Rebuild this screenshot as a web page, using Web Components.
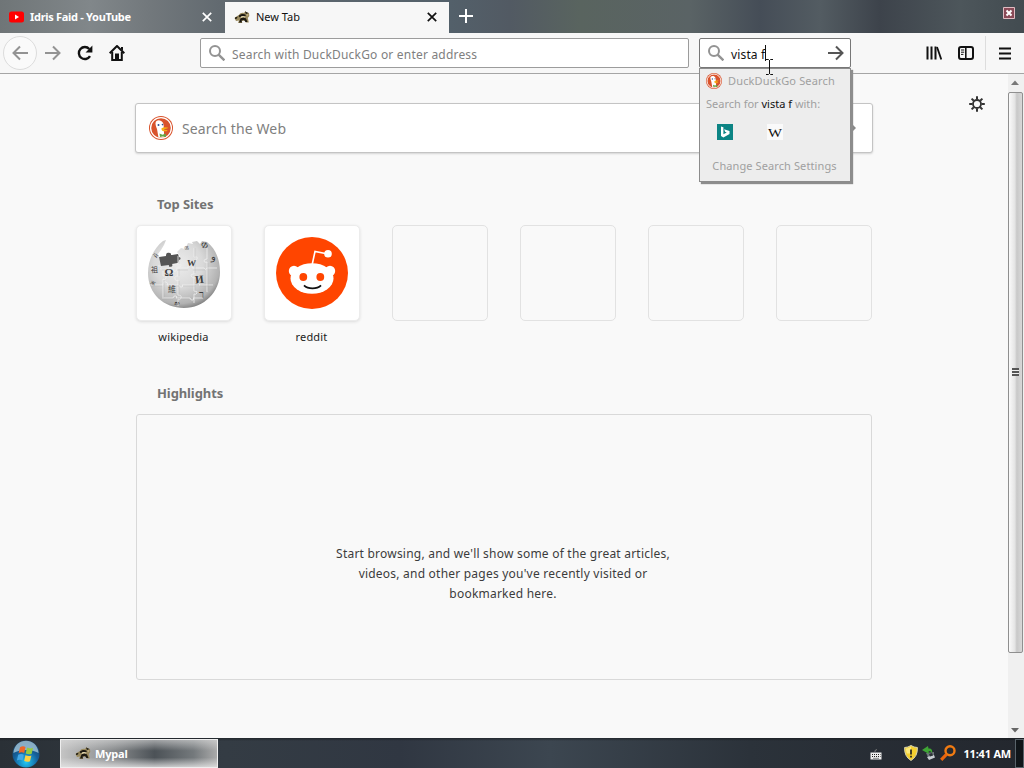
<!DOCTYPE html>
<html lang="en">
<head>
<meta charset="utf-8">
<title>New Tab</title>
<style>
    body {
        margin: 0;
        width: 1024px;
        height: 768px;
        overflow: hidden;
        font-family: "Noto Sans", "Open Sans", sans-serif;
        font-size: 11px;
        color: #111;
    }
</style>
</head>
<body>
<browser-window></browser-window>

<script>
const ICONS = {
    youtube: ['0 0 16 12', '<rect y=".5" width="15" height="11" rx="2.5" fill="#f00"/><path d="M6 3.5v5L10 6z" fill="#fff"/>'],
    close: ['0 0 10 10', '<path d="M.8.8l8.4 8.4M9.2.8L.8 9.2" stroke="currentColor" stroke-width="1.7"/>'],
    plus: ['0 0 14 14', '<path d="M7 0v14M0 7h14" stroke="currentColor" stroke-width="2"/>'],
    back: ['0 0 16 16', '<path d="M16 8H1.5M8 1.5L1.5 8 8 14.5" fill="none" stroke="currentColor" stroke-width="2"/>'],
    forward: ['0 0 16 16', '<path d="M0 8h14.5M8 1.5L14.5 8 8 14.5" fill="none" stroke="currentColor" stroke-width="2"/>'],
    reload: ['0 0 16 16', '<path d="M13 11.2A6 6 0 1 1 12.3 4" fill="none" stroke="currentColor" stroke-width="2.4"/><path d="M15.4.6v6.8H8.6z" fill="currentColor"/>'],
    home: ['0 0 16 16', '<path d="M.7 8.3L8 1l7.3 7.3" fill="none" stroke="currentColor" stroke-width="2" stroke-linejoin="round"/><path d="M3.2 7v8h9.6V7" fill="none" stroke="currentColor" stroke-width="2"/><path d="M6 15V8.5h4V15z" fill="currentColor"/><path d="M12 2h2v3.5l-2-1.5z" fill="currentColor"/>'],
    search: ['0 0 16 16', '<circle cx="6" cy="6" r="5" fill="none" stroke="currentColor" stroke-width="2"/><path d="M9.6 9.6L15.4 15.4" stroke="currentColor" stroke-width="2.4"/>'],
    library: ['0 0 16 16', '<path d="M1.5 1.5v13M5.5 1.5v13M9.5 1.5v13" stroke="currentColor" stroke-width="2"/><path d="M11 2l4.3 12.5" stroke="currentColor" stroke-width="1.8"/>'],
    sidebar: ['0 0 16 14', '<rect x="1" y="1" width="14" height="12" rx="2" fill="none" stroke="currentColor" stroke-width="2"/><path d="M7.8 1v12" stroke="currentColor" stroke-width="1.6"/><path d="M3 4h3.2M3 6.2h3.2M3 8.4h2.4" stroke="currentColor"/>'],
    menu: ['0 0 12 13', '<path d="M0 1.5h12M0 6.5h12M0 11.5h12" stroke="currentColor" stroke-width="2"/>'],
    gear: ['0 0 16 16', '<circle cx="8" cy="8" r="4" fill="none" stroke="currentColor" stroke-width="1.8"/><path d="M8 .2v3.3M8 12.5v3.3M.2 8h3.3M12.5 8h3.3M2.6 2.6l2.2 2.2M11.2 11.2l2.2 2.2M13.4 2.6l-2.2 2.2M4.8 11.2l-2.2 2.2" stroke="currentColor" stroke-width="2"/>'],
    raccoon: ['0 0 16 16', '<path d="M.5 9C2 7.500 3.500 6.500 5 6 6 4 8 3.500 10 4l1.500-2 1 1.500 2.500.5.3 3-1.500 2 1 4.500h-3l-1-2-3 .5.5 2H4l1-2.500-3 .5z" fill="#9a8a5e"/><path d="M4.500 7C7 4.500 10 4.500 12 6l-1 1.500C9 6.500 7 7 6 8.500zM11 2.500l3.500 1.500-2.500 1zM6.500 9.500C8 8 11 8 12 9.500l1.500 3.500h-2L10 11l-2.500.5L8 13.500H5zM1 8.500l2.500-.8-.5 1.800-2 .5z" fill="#1c1912"/><path d="M6.500 8c1.500-1.300 3.500-1 5-.2l-1 .9c-1-.6-2.500-.4-3.500.3zM12.500 5.500l2 .3-1.500 1z" fill="#e6dab2"/>'],
    duck: ['0 0 24 24', '<circle cx="12" cy="12" r="12" fill="#d9532c"/><circle cx="12" cy="12" r="10.4" fill="none" stroke="#fff" stroke-width="1.3"/><path d="M6.500 7.300C6.500 4.600 9.700 3.500 12.100 5c3 1.800 2.600 5.300 2.700 7l.4 9.200c-2 .5-4.200.4-5.800-.2L8 13C7.200 11 6.500 9 6.500 7.300z" fill="#fff"/><path d="M12.500 12.200c2.500-1.500 5.500-1 6.800-.4-1.300 1-3.700 1.300-5 1.800 1.400.5 3.600.3 4.300.8-1.400 1.600-5.500 1-6-.6z" fill="#f7ad13"/><circle cx="9.500" cy="9" r="1" fill="#2d4f8e"/><circle cx="13.500" cy="8.600" r=".8" fill="#2d4f8e"/><path d="M10.500 17.500l3 1.200 3.200-1.200.3 3.500-3.400-.5-2.600.6z" fill="#65a646"/>'],
    bing: ['0 0 16 16', '<path d="M0 0h16v16H0z" fill="#0c8484"/><path d="M4 2.500l2.400.8v7l3.300-1.800-1.600-.8-1-2.500 5.400 1.800v2.900L6.400 13.500 4 12z" fill="#fff"/>'],
    wiki: ['0 0 16 16', '<path d="M0 0h16v16H0z" fill="#fafafa"/><text x="8" y="12.500" text-anchor="middle" textLength="14" lengthAdjust="spacingAndGlyphs" font-family="Liberation Serif, serif" font-size="13" fill="#111">W</text>'],
    reddit: ['0 0 72 72', '<circle cx="36" cy="36" r="36" fill="#ff4500"/><path d="M36.3 27L39 14.500l13 2.500" fill="none" stroke="#fff" stroke-width="1.600"/><circle cx="52" cy="16.800" r="3.800" fill="#fff"/><circle cx="18" cy="34" r="5.200" fill="#fff"/><circle cx="54" cy="34" r="5.200" fill="#fff"/><ellipse cx="36" cy="41.500" rx="21.500" ry="15.300" fill="#fff"/><circle cx="27.300" cy="40" r="3.900" fill="#ff4500"/><circle cx="44.300" cy="40" r="3.900" fill="#ff4500"/><path d="M28 48.300c4 4 13 4 17 0" fill="none" stroke="#111" stroke-width="1.800"/>'],
    globe: ['0 0 74 74', `<defs><radialGradient id="g" cx=".42" cy=".36" r=".68"><stop offset="0" stop-color="#ececec"/><stop offset=".5" stop-color="#d9d9d9"/><stop offset=".85" stop-color="#b2b2b2"/><stop offset="1" stop-color="#777"/></radialGradient></defs>
        <path d="M1 37C1 24 7 12 16 5l3-1-2 5-3 5-3 4 1 3 3 8 17-1 1-8-3-4 4-4 4 1 3-6 5 1-1-2 5-1 3 3 2-3 5 1c9 7 13 18 13 30 0 20-16 36-36 36S1 58 1 37z" fill="url(#g)"/>
        <path d="M12 21l7-1c0-3 1-4 4-3 2 1 0 2 2 2l6-1 1 3c2 0 2 3 0 3l-1 3-6 1c2 3-4 4-3 1l-8 1z" fill="#555"/>
        <g fill="none" stroke="#efefef" stroke-width=".8"><path d="M4 33h7q-1-4 2-3t0 3h13q1 4 3 2t0-3h12q0-4 3-3t1 3h12q2 3 3 0h10M4 49h12q0-4 3-3t1 3h12q1 3 3 2t0-2h13q0-4 3-2t1 2h14M15 62h11q1-3 3-2t0 2h14q1 3 3 2t0-2h10M16 34v6q4-1 3 2t-3 1v18M31 20v8q4 0 3 2t-3 1v9q-4 0-3 3t3 1v15q4 0 3 3t-3 1v7M47 12v9q4-1 3 2t-3 1v14q-4 0-3 2t3 1v14q4 0 3 2t-3 1v9M60 12v11q-3 0-3 2t3 1v30"/></g>
        <g fill="none" stroke="#a4a4a4" stroke-width=".3"><path d="M4 34h7M15 34h11M30 34h11M46 34h12M4 50h11M21 50h11M36 50h12M53 50h13M15 63h11M30 63h12M32 20v8M32 33v7M32 45v14M48 12v9M48 25v12M48 43v12M17 44v17M61 27v28"/></g>
        <g font-family="Liberation Serif, Noto Sans CJK SC, serif" fill="#3c3c3c"><text x="17.500" y="40" font-size="11" font-weight="bold">Ω</text><text x="40" y="30" font-size="9" font-weight="bold" transform="rotate(4 44 27)">W</text><text x="48" y="47" font-size="11" font-weight="bold" transform="rotate(-6 52 43)">И</text><text x="21" y="56" font-size="8">維</text><text x="37" y="14" font-size="7">ঙ</text><text x="54" y="12" font-size="9" transform="rotate(30 57 9)">Ф</text><text x="4" y="36" font-size="7">祖</text><text x="4" y="49" font-size="7" transform="rotate(25 7 46)">ж</text><text x="6" y="21" font-size="7" transform="rotate(-50 9 18)">й</text><text x="64" y="24" font-size="10">و</text><text x="52" y="62" font-size="10">ר</text><text x="27" y="69" font-size="7">ல</text></g>`],
    orb: ['0 0 28 28', '<defs><radialGradient id="o" cx=".5" cy=".8" r=".8"><stop offset="0" stop-color="#23c8f5"/><stop offset=".55" stop-color="#14609c"/><stop offset="1" stop-color="#163d61"/></radialGradient></defs><circle cx="14" cy="14" r="13.5" fill="url(#o)"/><path d="M1.4 13C2 5 8 .8 14 .8S26 5 26.6 13c-7-4-18-4-25.2 0z" fill="#b9d7e5" opacity=".7"/><path d="M8 7.200q3-1.700 5.500-.2l-1.300 6q-3-1.400-5.600.2z" fill="#ed6729"/><path d="M15 7.600q3 1.500 6 .2l-1.300 6q-3 1.200-6-.3z" fill="#98cb40"/><path d="M6.200 14.800q3-1.600 5.600-.1l-1.200 5.700q-3-1.400-5.700.1z" fill="#44a8e8"/><path d="M13.400 15.200q3 1.500 6 .3L18 21.300q-3 1.200-5.800-.3z" fill="#fdd043"/>'],
    keyboard: ['0 0 12 12', '<path d="M5 4V2.500l2-1" fill="none" stroke="#777"/><path d="M.5 4.500h11v7H.5z" fill="#eee"/><path d="M2 6.500h8.500M2 8.500h8.500M3.500 10.300h5" stroke="#222" stroke-dasharray="1 1"/>'],
    shield: ['0 0 14 16', '<path d="M7 .5Q10 2.500 13.400 2.500q.4 9-6.400 13Q.2 11.500.6 2.500 4 2.500 7 .5z" fill="#f4cf2e" stroke="#d9d5b0"/><path d="M7 1.500Q4.500 3.500 2 3.500q0 3 .8 5H7z" fill="#fff3a0" opacity=".7"/><path d="M7 4.500v5M7 10.800v1.700" stroke="#222" stroke-width="1.700"/>'],
    device: ['0 0 14 16', '<path d="M4 8l3 6 5-2V7" fill="#6d757a"/><path d="M5 12l2 3 6-2.500-1-2.500z" fill="#c8ced2"/><path d="M7 9l3-1 1 2.500-3 1z" fill="#2c3236"/><path d="M0 5l6-4 .5 2.500C9 3 11 5 10 8 9 6.500 8 6 6.500 6.500L7 9z" fill="#3fa535"/>'],
    magnifier: ['0 0 16 16', '<circle cx="10" cy="5.800" r="4.500" fill="none" stroke="#f17b12" stroke-width="2.400"/><path d="M6.500 9.300L1.200 14.800" stroke="#e9650d" stroke-width="3.200"/>'],
    ibeam: ['0 0 9 16', '<path d="M1 .5h2.500l1 1 1-1H8M1 15.500h2.500l1-1 1 1H8M4.500 1v14" fill="none" stroke="#111"/>'],
    winclose: ['0 0 12 12', '<path d="M.5.5h11v11H.5z" fill="#8a4a57" stroke="#e0bcc2"/><path d="M3.500 3.500l5 5M8.500 3.500l-5 5" stroke="#fff" stroke-width="2"/>'],
    up: ['0 0 8 5', '<path d="M0 5l4-4.500L8 5z" fill="#777"/>'],
    down: ['0 0 8 5', '<path d="M0 0h8L4 4.500z" fill="#666"/>'],
    right: ['0 0 6 8', '<path d="M0 0h2l4 4-4 4H0z" fill="#888"/>']
};

// <ui-icon name="" w="" h="">
class UiIcon extends HTMLElement {
    constructor() {
        super();
        this.attachShadow({ mode: 'open' });
    }

    connectedCallback() {
        const [viewBox, body] = ICONS[this.getAttribute('name')];
        const w = this.getAttribute('w') || 16;
        const h = this.getAttribute('h') || w;
        this.shadowRoot.innerHTML = `
            <style>
                :host { display: block; flex: none; width: ${w}px; height: ${h}px; }
                svg { display: block; }
            </style>
            <svg width="${w}" height="${h}" viewBox="${viewBox}">${body}</svg>
        `;
    }
}
customElements.define('ui-icon', UiIcon);

class BaseElement extends HTMLElement {
    constructor() {
        super();
        this.attachShadow({ mode: 'open' });
        this.shadowRoot.innerHTML = this.template();
    }
}

class BrowserTab extends BaseElement {
    template() {
        return `
            <style>
                :host {
                    display: flex;
                    align-items: center;
                    box-sizing: border-box;
                    width: 225px;
                    padding: 0 13px 0 9px;
                    font-weight: bold;
                    letter-spacing: -.3px;
                    color: #fff;
                }
                :host([active]) {
                    width: 224px;
                    padding-right: 12px;
                    margin-top: 2px;
                    padding-bottom: 2px;
                    background: #f7f7f7;
                    font-weight: normal;
                    letter-spacing: 0;
                    color: #111;
                }
                .label { flex: 1; margin-left: 5px; white-space: nowrap; }
                :host([active]) .label { margin-left: 6px; }
            </style>
            <slot name="icon"></slot>
            <span class="label"><slot></slot></span>
            <ui-icon name="close" w="10"></ui-icon>
        `;
    }
}
customElements.define('browser-tab', BrowserTab);

class TabStrip extends BaseElement {
    template() {
        return `
            <style>
                :host {
                    display: flex;
                    height: 33px;
                    background: linear-gradient(90deg, #6f7577 0, #81878a 90px, #72787c 150px, #626a70 220px, #53606a 450px, #525a63 510px, #59645f 580px, #5a6365 690px, #454d57 760px, #535c62 820px, #3d434b 880px, #4d565b 960px, #424b50 1024px);
                }
                .add { margin: 9px 0 0 10px; color: #fff; }
                .win { margin: 7px 9px 0 auto; }
            </style>
            <slot></slot>
            <ui-icon class="add" name="plus" w="14"></ui-icon>
            <ui-icon class="win" name="winclose" w="12"></ui-icon>
        `;
    }
}
customElements.define('tab-strip', TabStrip);

class SearchPopup extends BaseElement {
    template() {
        return `
            <style>
                :host {
                    display: block;
                    box-sizing: border-box;
                    width: 152px;
                    height: 114px;
                    border: 1px solid #8c8c8c;
                    background: #ededed;
                    box-shadow: 2px 2px 1px #8d8d8d;
                    font-size: 11px;
                    color: #a0a0a0;
                    white-space: nowrap;
                }
                .row { display: flex; align-items: center; }
                .engine { height: 23px; padding-left: 6px; gap: 6px; letter-spacing: .15px; }
                .with { height: 23px; padding-left: 6px; }
                .with b { font-weight: normal; color: #111; }
                .engines { height: 34px; padding-left: 17px; gap: 34px; }
                .settings { height: 32px; justify-content: center; padding-right: 1px; letter-spacing: .1px; }
            </style>
            <div class="row engine"><ui-icon name="duck" w="16"></ui-icon><span>DuckDuckGo Search</span></div>
            <div class="row with"><span>Search for <b>vista f</b> with:</span></div>
            <div class="row engines"><ui-icon name="bing" w="16"></ui-icon><ui-icon name="wiki" w="16"></ui-icon></div>
            <div class="row settings"><span>Change Search Settings</span></div>
        `;
    }
}
customElements.define('search-popup', SearchPopup);

class NavToolbar extends BaseElement {
    template() {
        return `
            <style>
                :host {
                    display: flex;
                    position: relative;
                    z-index: 1;
                    box-sizing: border-box;
                    height: 41px;
                    padding-left: 3px;
                    border-bottom: 1px solid #a5a5a5;
                    background: #f7f7f7;
                    align-items: center;
                    color: #111;
                    font-size: 12px;
                }
                .back {
                    display: flex;
                    align-items: center;
                    justify-content: center;
                    box-sizing: border-box;
                    width: 34px;
                    height: 34px;
                    border: 1px solid #dcdcdc;
                    border-radius: 50%;
                    background: #fafafa;
                }
                .grey { color: #939393; }
                .fwd { margin-left: 8px; }
                .btn { margin-left: 16px; }
                .field {
                    display: flex;
                    align-items: center;
                    box-sizing: border-box;
                    height: 30px;
                    border: 1px solid #9c9c9c;
                    border-radius: 2px;
                    background: #fff;
                    padding-left: 8px;
                    white-space: nowrap;
                }
                .field span { margin: 2px 0 0 7px; }
                .url { width: 489px; margin-left: 75px; color: #808080; letter-spacing: .2px; }
                .find { width: 152px; margin-left: 10px; border-color: #777; letter-spacing: .15px; }
                .find .go { margin-left: auto; margin-right: 6px; color: #555; }
                .caret { width: 1px; height: 16px; background: #111; }
                .lib { margin-left: 75px; }
                .sep { width: 1px; height: 34px; margin: 0 13px 0 11px; background: #ddd; }
                search-popup { position: absolute; left: 699px; top: 35px; }
                .pointer { position: absolute; left: 765px; top: 26px; }
            </style>
            <div class="back"><ui-icon class="grey" name="back"></ui-icon></div>
            <ui-icon class="grey fwd" name="forward"></ui-icon>
            <ui-icon class="btn" name="reload"></ui-icon>
            <ui-icon class="btn" name="home"></ui-icon>
            <div class="field url"><ui-icon class="grey" name="search"></ui-icon><span>Search with DuckDuckGo or enter address</span></div>
            <div class="field find"><ui-icon class="grey" name="search"></ui-icon><span>vista f</span><div class="caret"></div><ui-icon class="go" name="forward"></ui-icon></div>
            <ui-icon class="lib" name="library"></ui-icon>
            <ui-icon class="btn" name="sidebar" w="16" h="14"></ui-icon>
            <div class="sep"></div>
            <ui-icon name="menu" w="12" h="13"></ui-icon>
            <search-popup></search-popup>
            <ui-icon class="pointer" name="ibeam" w="9" h="16"></ui-icon>
        `;
    }
}
customElements.define('nav-toolbar', NavToolbar);

class SiteTile extends BaseElement {
    template() {
        return `
            <style>
                :host { display: block; width: 96px; text-align: center; }
                .tile {
                    display: flex;
                    align-items: center;
                    justify-content: center;
                    box-sizing: border-box;
                    height: 96px;
                    border: 1px solid #e2e2e2;
                    border-radius: 5px;
                }
                :host([filled]) .tile {
                    border-color: #ececec;
                    background: #fff;
                    box-shadow: 0 1px 3px #dcdcdc;
                }
                .label { margin-top: 8px; height: 16px; line-height: 16px; letter-spacing: .15px; padding-right: 1px; color: #222; }
            </style>
            <div class="tile"><slot name="icon"></slot></div>
            <div class="label"><slot></slot></div>
        `;
    }
}
customElements.define('site-tile', SiteTile);

class NewTabPage extends BaseElement {
    template() {
        return `
            <style>
                :host {
                    display: block;
                    position: relative;
                    flex: 1;
                    background: #f9f9f9;
                    padding: 29px 136px 0;
                }
                .gear { position: absolute; right: 23px; top: 22px; color: #333; }
                .search {
                    display: flex;
                    align-items: center;
                    box-sizing: border-box;
                    height: 50px;
                    margin: 0 -1px;
                    padding: 0 16px 0 13px;
                    border: 1px solid #c4c4c4;
                    border-radius: 3px;
                    background: #fff;
                    box-shadow: 0 1px 2px #d4d4d4;
                    color: #808080;
                }
                .search span { flex: 1; margin-left: 9px; font-size: 14px; letter-spacing: .12px; }
                h3 {
                    margin: 0;
                    padding-left: 21px;
                    font-size: 13px;
                    line-height: 20px;
                    letter-spacing: -.1px;
                    color: #737373;
                }
                .sites-title { margin-top: 41px; }
                .sites { display: flex; gap: 32px; margin-top: 11px; }
                .high-title { margin-top: 38px; }
                .high {
                    display: flex;
                    align-items: center;
                    justify-content: center;
                    box-sizing: border-box;
                    height: 266px;
                    margin-top: 11px;
                    padding: 53px 2px 0 0;
                    border: 1px solid #d9d9d9;
                    border-radius: 3px;
                    font-size: 12px;
                    line-height: 20px;
                    letter-spacing: .22px;
                    text-align: center;
                    color: #3c3c3c;
                }
            </style>
            <ui-icon class="gear" name="gear"></ui-icon>
            <div class="search"><ui-icon name="duck" w="24"></ui-icon><span>Search the Web</span><ui-icon name="right" w="6" h="8"></ui-icon></div>
            <h3 class="sites-title">Top Sites</h3>
            <div class="sites">
                <site-tile filled><ui-icon slot="icon" name="globe" w="74"></ui-icon>wikipedia</site-tile>
                <site-tile filled><ui-icon slot="icon" name="reddit" w="72"></ui-icon>reddit</site-tile>
                <site-tile></site-tile>
                <site-tile></site-tile>
                <site-tile></site-tile>
                <site-tile></site-tile>
            </div>
            <h3 class="high-title">Highlights</h3>
            <div class="high"><div>Start browsing, and we'll show some of the great articles,<br>videos, and other pages you've recently visited or<br>bookmarked here.</div></div>
        `;
    }
}
customElements.define('new-tab-page', NewTabPage);

class ScrollBar extends BaseElement {
    template() {
        return `
            <style>
                :host {
                    display: flex;
                    flex-direction: column;
                    align-items: flex-start;
                    width: 16px;
                    background: #f0f0f0;
                }
                .up { margin: 6px 0 7px 3px; }
                .thumb {
                    display: flex;
                    align-items: center;
                    justify-content: center;
                    box-sizing: border-box;
                    width: 15px;
                    height: 561px;
                    border: 1px solid #8f8f8f;
                    border-radius: 2px;
                    background: linear-gradient(90deg, #fafafa, #e4e4e4 45%, #c8c8c8 60%, #d8d8d8);
                }
                .grip { width: 7px; height: 8px; margin-right: 1px; margin-bottom: 2px; background: repeating-linear-gradient(#555 0 2px, #eee 2px 3px); }
                .down { margin: auto 0 5px 3px; }
            </style>
            <ui-icon class="up" name="up" w="8" h="5"></ui-icon>
            <div class="thumb"><div class="grip"></div></div>
            <ui-icon class="down" name="down" w="8" h="5"></ui-icon>
        `;
    }
}
customElements.define('scroll-bar', ScrollBar);

class TaskBar extends BaseElement {
    template() {
        return `
            <style>
                :host {
                    display: flex;
                    align-items: center;
                    height: 30px;
                    background: linear-gradient(#16191c99 0, #16191c00 3px), linear-gradient(90deg, #2a3036, #343c44 225px, #303742 400px, #3c4650 550px, #2b323a 750px, #23272e);
                    color: #fff;
                    font-weight: bold;
                }
                .orb { margin: 2px 0 0 12px; }
                .task {
                    display: flex;
                    align-items: center;
                    box-sizing: border-box;
                    width: 158px;
                    height: 29px;
                    margin-left: 20px;
                    padding-left: 14px;
                    gap: 4px;
                    border: 1px solid #eee;
                    background: linear-gradient(#dcdcdc99 0, #dcdcdc00 40%, #e5e5e500 65%, #e5e5e5cc), linear-gradient(90deg, #c4c4c4, #85888a 35%, #4c5257 60%, #74797c 85%, #aaa);
                }
                .task span { letter-spacing: -.2px; }
                .tray { display: flex; align-items: center; margin-left: auto; }
                .kb { margin: 2px 22px 0 0; }
                .dev { margin: 0 4px; }
                .clock { margin: 0 4px 0 7px; letter-spacing: -.2px; white-space: nowrap; }
                .show { box-sizing: border-box; width: 9px; height: 29px; border: 1px solid #59636a; background: #101519; }
            </style>
            <ui-icon class="orb" name="orb" w="28"></ui-icon>
            <div class="task"><ui-icon name="raccoon" w="16"></ui-icon><span>Mypal</span></div>
            <div class="tray">
                <ui-icon class="kb" name="keyboard" w="12"></ui-icon>
                <ui-icon name="shield" w="14" h="16"></ui-icon>
                <ui-icon class="dev" name="device" w="14" h="16"></ui-icon>
                <ui-icon name="magnifier" w="16"></ui-icon>
                <span class="clock">11:41 AM</span>
                <div class="show"></div>
            </div>
        `;
    }
}
customElements.define('task-bar', TaskBar);

class BrowserWindow extends BaseElement {
    template() {
        return `
            <style>
                :host { display: flex; flex-direction: column; width: 1024px; height: 768px; }
                .content { display: flex; flex: 1; }
            </style>
            <tab-strip>
                <browser-tab><ui-icon slot="icon" name="youtube" w="16" h="12"></ui-icon>Idris Faid - YouTube</browser-tab>
                <browser-tab active><ui-icon slot="icon" name="raccoon" w="16"></ui-icon>New Tab</browser-tab>
            </tab-strip>
            <nav-toolbar></nav-toolbar>
            <div class="content">
                <new-tab-page></new-tab-page>
                <scroll-bar></scroll-bar>
            </div>
            <task-bar></task-bar>
        `;
    }
}
customElements.define('browser-window', BrowserWindow);
</script>
</body>
</html>
